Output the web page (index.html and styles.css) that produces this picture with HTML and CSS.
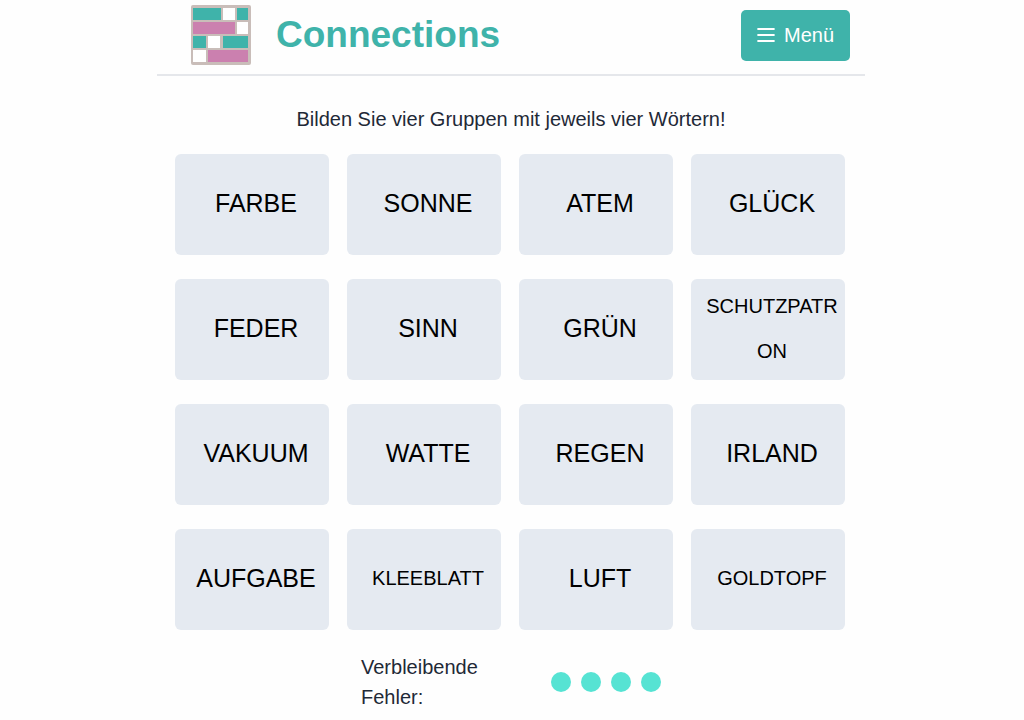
FILE: index.html
```html
<!DOCTYPE html>
<html lang="de">
<head>
  <meta charset="utf-8">
  <meta name="viewport" content="width=device-width, initial-scale=1">
  <title>Connections</title>
  <link rel="stylesheet" href="styles.css">
</head>
<body>
  <div class="page">
    <header class="header">
      <svg class="logo" viewBox="0 0 60 60" aria-hidden="true">
        <rect width="60" height="60" rx="2" fill="#c9bdb9"/>
        <g fill="#3fb3aa">
          <rect x="2" y="3" width="28" height="12"/>
          <rect x="46" y="3" width="11" height="12"/>
          <rect x="2" y="31" width="13" height="12"/>
          <rect x="32" y="31" width="25" height="12"/>
        </g>
        <g fill="#cb80af">
          <rect x="2" y="17" width="42" height="12"/>
          <rect x="17" y="45" width="40" height="12"/>
        </g>
        <g fill="#fff">
          <rect x="32" y="3" width="12" height="12"/>
          <rect x="46" y="17" width="11" height="12"/>
          <rect x="17" y="31" width="12" height="12"/>
          <rect x="2" y="45" width="13" height="12"/>
        </g>
      </svg>
      <h1 class="title">Connections</h1>
      <button type="button" class="menu">
        <svg class="menu-icon" viewBox="0 0 18 16" aria-hidden="true">
          <path d="M1.2 2H16.8M1.2 8H16.8M1.2 14H16.8" stroke="#fff" stroke-width="2.2" stroke-linecap="round"/>
        </svg>
        Menü
      </button>
    </header>

    <main>
      <p class="intro">Bilden Sie vier Gruppen mit jeweils vier Wörtern!</p>

      <div class="board">
        <button type="button" class="tile">FARBE</button>
        <button type="button" class="tile">SONNE</button>
        <button type="button" class="tile">ATEM</button>
        <button type="button" class="tile">GLÜCK</button>
        <button type="button" class="tile">FEDER</button>
        <button type="button" class="tile">SINN</button>
        <button type="button" class="tile">GRÜN</button>
        <button type="button" class="tile long">SCHUTZPATRON</button>
        <button type="button" class="tile">VAKUUM</button>
        <button type="button" class="tile">WATTE</button>
        <button type="button" class="tile">REGEN</button>
        <button type="button" class="tile">IRLAND</button>
        <button type="button" class="tile">AUFGABE</button>
        <button type="button" class="tile long">KLEEBLATT</button>
        <button type="button" class="tile">LUFT</button>
        <button type="button" class="tile long">GOLDTOPF</button>
      </div>

      <div class="mistakes">
        <span class="mistakes-label">Verbleibende Fehler:</span>
        <div class="dots">
          <span class="dot"></span>
          <span class="dot"></span>
          <span class="dot"></span>
          <span class="dot"></span>
        </div>
      </div>
    </main>
  </div>
</body>
</html>
```
FILE: styles.css
```css
* {
  box-sizing: border-box;
}

body {
  margin: 0;
  padding-right: 2px;
  background-color: #fefefe;
  color: #1f2937;
  font-family: "Liberation Sans", Arial, sans-serif;
  font-size: 20px;
  line-height: 30px;
}

button {
  border: none;
  font-family: inherit;
  cursor: pointer;
}

.page {
  max-width: 708px;
  margin: 0 auto;
}

.header {
  display: flex;
  align-items: center;
  padding: 5px 15px 9px 34px;
  border-bottom: 2px solid #e5e7eb;
}

.logo {
  width: 60px;
  height: 60px;
}

.title {
  margin: 0 auto 0 25px;
  color: #3fb3aa;
  font-size: 37px;
  line-height: 60px;
}

.menu {
  display: flex;
  align-items: center;
  gap: 9px;
  padding: 10px 16px;
  border-radius: 5px;
  background-color: #3fb3aa;
  color: #fff;
  font-size: 20px;
  line-height: 31px;
}

.menu-icon {
  width: 18px;
  height: 16px;
}

.intro {
  margin: 28px 0 20px;
  text-align: center;
}

.board {
  display: grid;
  grid-template-columns: repeat(4, 1fr);
  grid-auto-rows: minmax(101px, auto);
  gap: 24px 18px;
  padding: 0 20px 0 18px;
}

.tile {
  padding: 0 4px 2px 12px;
  border-radius: 6px;
  background-color: #e5eaf1;
  color: #000;
  font-size: 25px;
  line-height: 45px;
  overflow-wrap: anywhere;
}

.tile.long {
  font-size: 20px;
}

.mistakes {
  display: flex;
  align-items: center;
  justify-content: space-between;
  max-width: 300px;
  margin: 22px auto 0;
}

.mistakes-label {
  flex: 0 1 150px;
}

.dots {
  display: flex;
  gap: 10px;
}

.dot {
  width: 20px;
  height: 20px;
  border-radius: 50%;
  background-color: #56e3d3;
}
```
